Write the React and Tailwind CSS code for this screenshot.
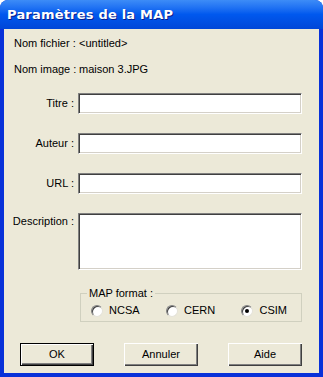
import React from 'react';

const font = { fontFamily: "'Liberation Sans', Arial, sans-serif" };

// ─── Sunken text field ────────────────────────────────────────────────────────
function Field({ className = 'h-[21px]' }) {
  return (
    <div
      className={`w-[224px] bg-white border border-t-[#808080] border-l-[#808080] border-b-white border-r-white shadow-[inset_1px_1px_0_#404040,inset_-1px_-1px_0_#d4d0c8] ${className}`}
    />
  );
}

function Row({ label, children, top = false }) {
  return (
    <div className={`flex ${top ? 'items-start' : 'items-center'}`}>
      <div className={`w-[60px] flex justify-end ${top ? 'pt-[2px]' : ''}`}>
        <span className="whitespace-nowrap">{label}</span>
      </div>
      <div className="ml-[4px]">{children}</div>
    </div>
  );
}

// ─── Radio ────────────────────────────────────────────────────────────────────
function Radio({ label, checked }) {
  return (
    <div className="flex items-center gap-[6px]">
      <span className="w-[12px] h-[12px] rounded-full bg-white border border-t-[#808080] border-l-[#808080] border-b-[#e4e2d8] border-r-[#e4e2d8] shadow-[inset_1px_1px_0_#404040] flex items-center justify-center">
        {checked && <span className="w-[4px] h-[4px] rounded-full bg-black block" />}
      </span>
      <span>{label}</span>
    </div>
  );
}

// ─── Button ───────────────────────────────────────────────────────────────────
function Button({ children, primary }) {
  return (
    <button
      className={`w-[74px] h-[23px] bg-[#ece9d8] text-black text-[11px] ${
        primary
          ? 'border border-black shadow-[inset_1px_1px_0_#fff,inset_-1px_-1px_0_#404040,inset_-2px_-2px_0_#808080]'
          : 'shadow-[inset_1px_1px_0_#fff,inset_-1px_-1px_0_#404040,inset_-2px_-2px_0_#808080]'
      }`}
      style={font}
    >
      {children}
    </button>
  );
}

export default function App() {
  return (
    <div className="w-[323px] h-[377px] bg-white text-[11px] leading-[13px] text-black" style={font}>
      <div className="w-full h-full flex flex-col rounded-t-[8px] overflow-hidden bg-[#0831d9]">
        {/* ── Title bar ── */}
        <div className="h-[29px] shrink-0 flex items-center pl-[7px] bg-gradient-to-b from-[#3d8cf7] via-[#0058ee] to-[#0046d8]">
          <span className="text-white font-bold text-[13px] tracking-[0.2px] [text-shadow:1px_1px_0_#0a1e8c]" style={{ fontFamily: "'DejaVu Sans', sans-serif" }}>
            Paramètres de la MAP
          </span>
        </div>

        {/* ── Body ── */}
        <div className="flex-1 mx-[4px] mb-[4px] bg-[#ece9d8] pl-[10px] pt-[8px] flex flex-col">
          <div className="flex">
            <span className="w-[65px] whitespace-nowrap">Nom fichier :</span>
            <span>&lt;untitled&gt;</span>
          </div>
          <div className="flex mt-[13px]">
            <span className="w-[65px] whitespace-nowrap">Nom image :</span>
            <span>maison 3.JPG</span>
          </div>

          <div className="mt-[17px] flex flex-col gap-[19px]">
            <Row label="Titre :"><Field /></Row>
            <Row label="Auteur :"><Field /></Row>
            <Row label="URL :"><Field /></Row>
            <Row label="Description :" top><Field className="h-[57px]" /></Row>
          </div>

          {/* ── MAP format group ── */}
          <div className="ml-[66px] mt-[23px] w-[222px] h-[29px] relative border border-[#d0d0bf] flex items-center justify-between pl-[10px] pr-[14px] pt-[6px]">
            <span className="absolute -top-[7px] left-[6px] px-[2px] bg-[#ece9d8]">MAP format :</span>
            <Radio label="NCSA" />
            <Radio label="CERN" />
            <Radio label="CSIM" checked />
          </div>

          {/* ── Buttons ── */}
          <div className="mt-[21px] ml-[6px] flex gap-[30px]">
            <Button primary>OK</Button>
            <Button>Annuler</Button>
            <Button>Aide</Button>
          </div>
        </div>
      </div>
    </div>
  );
}
